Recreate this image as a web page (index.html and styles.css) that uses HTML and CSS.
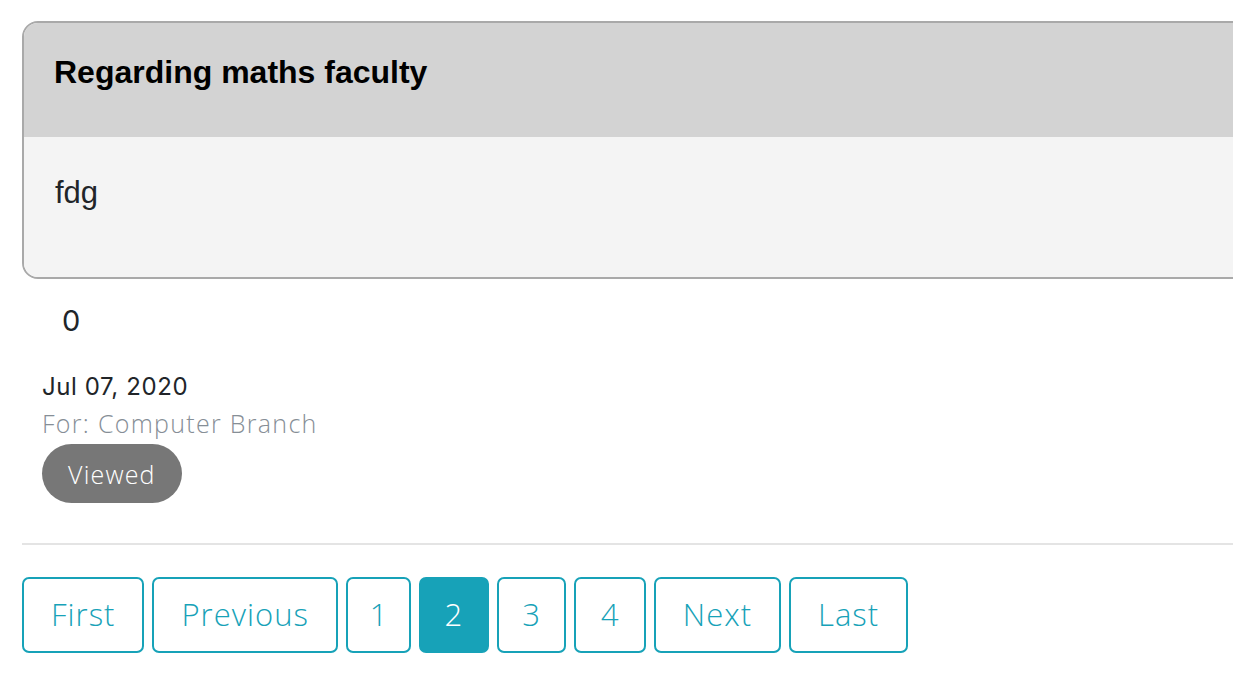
FILE: index.html
```html
<!DOCTYPE html>
<html lang="en">
<head>
<meta charset="utf-8">
<title>Notice</title>
<link rel="stylesheet" href="styles.css">
</head>
<body>
<div class="page">
  <div class="notice-card">
    <div class="notice-header">
      <h4 class="notice-title">Regarding maths faculty</h4>
    </div>
    <div class="notice-body">
      <p class="notice-text">fdg</p>
    </div>
  </div>
  <div class="notice-meta">
    <div class="count">0</div>
    <div class="date">Jul 07, 2020</div>
    <div class="audience">For: Computer Branch</div>
    <span class="badge">Viewed</span>
  </div>
  <hr class="divider">
  <nav class="pagination">
    <a class="page-link word">First</a>
    <a class="page-link word">Previous</a>
    <a class="page-link">1</a>
    <a class="page-link active">2</a>
    <a class="page-link">3</a>
    <a class="page-link">4</a>
    <a class="page-link word">Next</a>
    <a class="page-link word">Last</a>
  </nav>
</div>
</body>
</html>
```

FILE: styles.css
```css
html, body {
  margin: 0;
  padding: 0;
  overflow: hidden;
  background: #ffffff;
}

.page {
  width: 1280px;
  padding: 21px 0 0 22px;
  font-family: Inter, "DejaVu Sans", sans-serif;
}

.notice-card {
  border: 2px solid #a9a9a9;
  border-radius: 16px;
  overflow: hidden;
}

.notice-header {
  background: #d3d3d3;
  padding: 30px 30px 46px;
}

.notice-title {
  margin: 0;
  font-family: "Liberation Sans", Arial, sans-serif;
  font-weight: bold;
  font-size: 32px;
  line-height: 38px;
  color: #000;
}

.notice-body {
  background: #f4f4f4;
  padding: 33px 31px 61px;
}

.notice-text {
  margin: 0;
  font-family: "Liberation Sans", Arial, sans-serif;
  font-size: 31px;
  line-height: 46px;
  color: #212529;
}

.notice-meta {
  padding: 20px 0 0 20px;
  display: flex;
  flex-direction: column;
  align-items: flex-start;
}

.count {
  padding-left: 20px;
  font-size: 29px;
  line-height: 44px;
  color: #212529;
}

.date {
  margin-top: 25px;
  font-size: 24px;
  letter-spacing: 0.6px;
  line-height: 38px;
  color: #212529;
}

.audience {
  font-family: "Open Sans", Inter, sans-serif;
  font-size: 25px;
  font-weight: 300;
  letter-spacing: 1.3px;
  line-height: 34px;
  color: #868e96;
}

.badge {
  margin-top: 4px;
  display: inline-flex;
  align-items: center;
  justify-content: center;
  height: 59px;
  padding: 0 26px;
  border-radius: 30px;
  background: #777777;
  color: #ffffff;
  font-family: "Open Sans", Inter, sans-serif;
  font-size: 25px;
  font-weight: 300;
  letter-spacing: 1.2px;
}

.divider {
  margin: 40px 0 0;
  border: 0;
  border-top: 2px solid #e4e4e4;
}

.pagination {
  display: flex;
  gap: 8px;
  margin-top: 32px;
}

.page-link {
  display: flex;
  align-items: center;
  justify-content: center;
  box-sizing: border-box;
  height: 76px;
  padding: 0 24px 3px;
  border: 2px solid #17a2b8;
  border-radius: 7px;
  color: #17a2b8;
  font-family: "Open Sans", Inter, sans-serif;
  font-size: 31px;
  font-weight: 300;
  letter-spacing: 1px;
  font-variant-numeric: proportional-nums;
}

.page-link.word {
  padding-left: 27px;
  padding-right: 27px;
}

.page-link.active {
  background: #17a2b8;
  color: #ffffff;
}
```
